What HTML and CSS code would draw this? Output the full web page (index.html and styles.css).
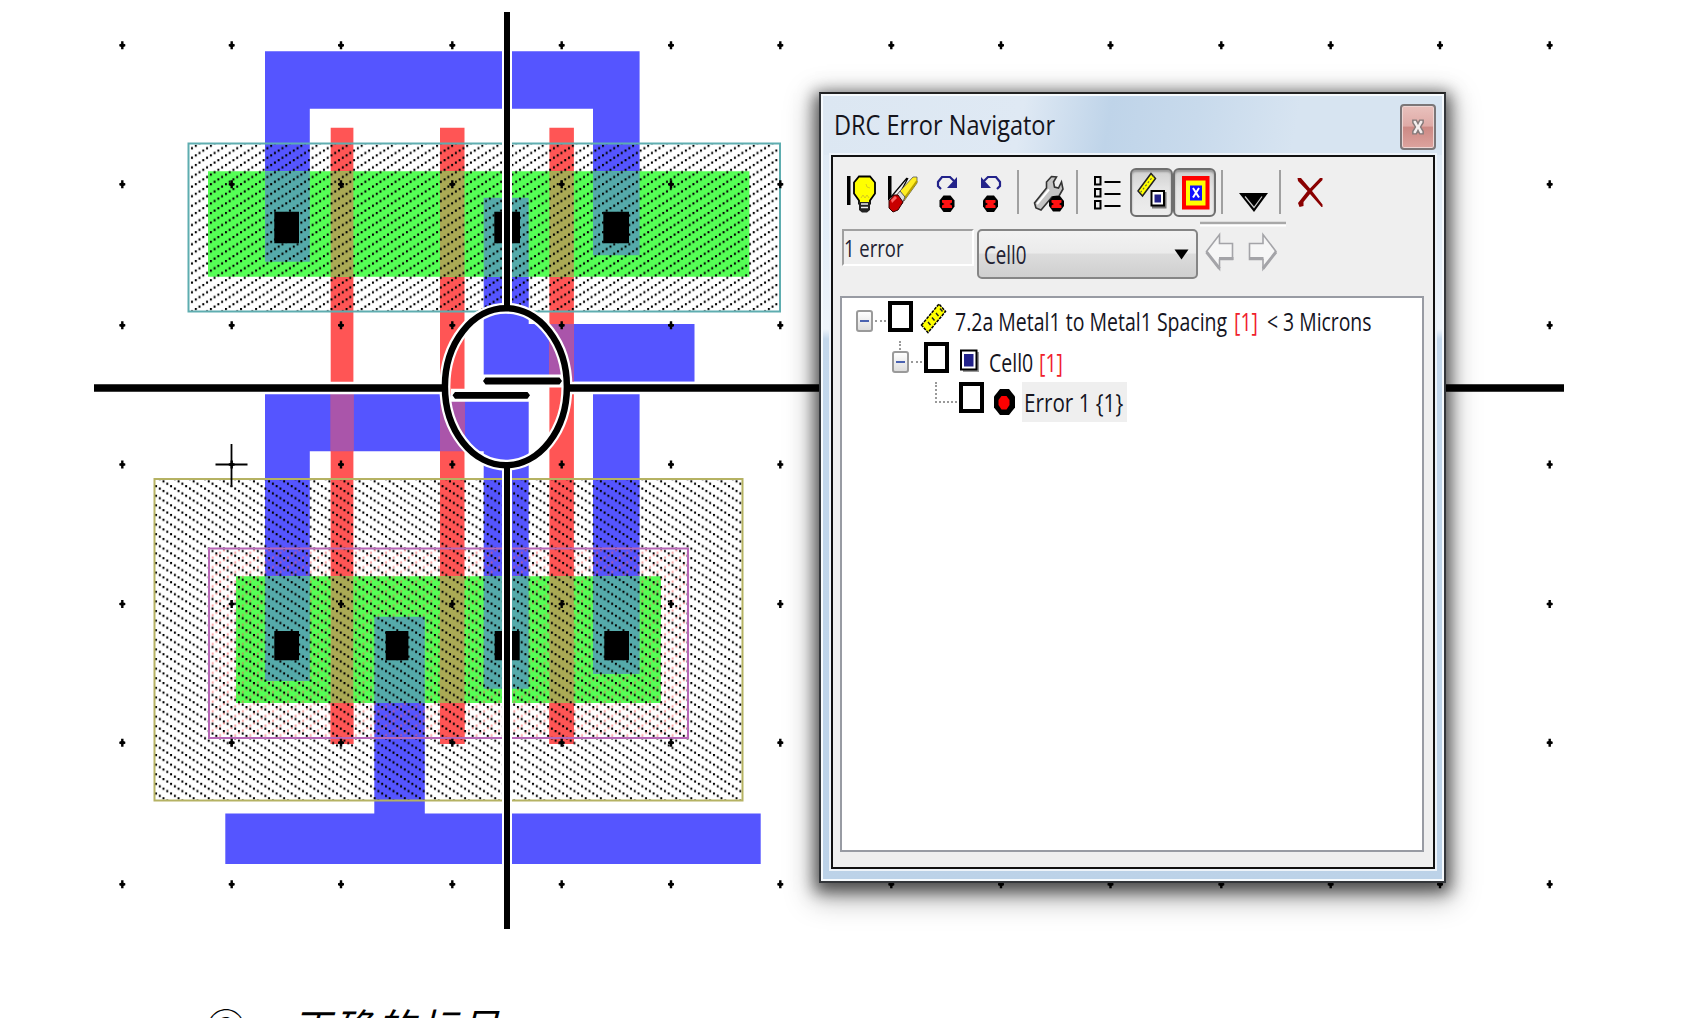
FILE: index.html
```html
<!DOCTYPE html>
<html lang="zh">
<head>
<meta charset="utf-8">
<title>DRC Error Navigator</title>
<link rel="stylesheet" href="styles.css">
</head>
<body>
<main class="page">
  <section class="figure">
    <svg class="layout" width="1684" height="960" viewBox="0 0 1684 960">
      <defs>
        <pattern id="hatch-up" patternUnits="userSpaceOnUse" x="190.1" y="139.9" width="15.08" height="9.604">
          <path d="M.9 7.3h2v2.100h-2zM4.700 4.900h2v2.100h-2zM8.400 2.500h2v2.100h-2zM12.200 .1h2v2.100h-2z"/>
        </pattern>
        <pattern id="hatch-down" patternUnits="userSpaceOnUse" x="154.1" y="485.1" width="15.08" height="9.604">
          <path d="M.9 .1h2v2.100h-2zM4.700 2.500h2v2.100h-2zM8.400 4.900h2v2.100h-2zM12.200 7.300h2v2.100h-2z"/>
        </pattern>
        <pattern id="hatch-red" patternUnits="userSpaceOnUse" x="210.8" y="549.3" width="15.08" height="9.604">
          <path fill="#f55" d="M.9 7.3h2v2.100h-2zM4.700 4.900h2v2.100h-2zM8.400 2.500h2v2.100h-2zM12.200 .1h2v2.100h-2z"/>
        </pattern>
        <path id="g" d="M-1.2-4h2.4v2.4l1.8 .6v2l-1.8 .6v2.4h-2.4v-2.4l-1.8-.6v-2l1.8-.6z"/>
        <g id="grid-row">
          <use href="#g" x="122.3"/><use href="#g" x="231.7"/><use href="#g" x="341"/><use href="#g" x="452.3"/><use href="#g" x="561.7"/><use href="#g" x="671"/><use href="#g" x="780.3"/><use href="#g" x="891.3"/><use href="#g" x="1001"/><use href="#g" x="1110.5"/><use href="#g" x="1221.3"/><use href="#g" x="1330.7"/><use href="#g" x="1440"/><use href="#g" x="1549.7"/>
        </g>
      </defs>

      <g class="metal">
        <path d="M265 51.3H639.6V255.3H593V108.7H309.8V261.7H265z"/>
        <path d="M483.7 197.7H528.7V324H694.5V381.7H483.7z"/>
        <path d="M265 394H528.7V688.7H483.7V451.3H309.8V681H265z"/>
        <path d="M593 394H639.6V674H593z"/>
        <path d="M374.3 616.7H424.8V813.5H760.7V864H225.3V813.5H374.3z"/>
      </g>
      <g class="poly">
        <path d="M330.7 127.7h22.7v616.3h-22.7zM440 127.7h24.5v616.3h-24.5zM549.4 127.7h24.5v616.3h-24.5z"/>
      </g>
      <path class="poly-metal" d="M330.7 394h22.7v57.3h-22.7zM440 394h24.5v57.3h-24.5zM549.4 324h24.5v57.7h-24.5z"/>
      <path class="active" d="M208 171.3h541.4v105.4H208zM236 576.3h425v126.7h-425z"/>
      <rect x="210" y="550" width="477" height="187" fill="url(#hatch-red)" opacity=".5"/>
      <path class="poly" d="M330.700 703h22.700v41h-22.700zM440 703h24.500v41h-24.500zM549.400 703h24.500v41h-24.500z"/>
      <path class="poly-active" d="M330.7 171.3h22.7v105.4h-22.7zM440 171.3h24.5v105.4h-24.5zM549.4 171.3h24.5v105.4h-24.5zM330.7 576.3h22.7v126.7h-22.7zM440 576.3h24.5v126.7h-24.5zM549.4 576.3h24.5v126.7h-24.5z"/>
      <path class="metal-active" d="M265 171.3h44.8v90.4h-44.8zM483.7 197.7h45v79h-45zM593 171.3h46.6v84h-46.6zM265 576.3h44.8v104.7h-44.8zM374.3 616.7h50.5v86.3h-50.5zM483.7 576.3h45v112.4h-45zM593 576.3h46.6v97.7h-46.6z"/>

      <rect x="190" y="144.500" width="588" height="166.500" fill="url(#hatch-up)"/>
      <rect x="155" y="480" width="587" height="320" fill="url(#hatch-down)"/>
      <path d="M274.3 211.700h24.700v31.600h-24.700zM494.300 211.700h25.700v31.600h-25.700zM603.300 211.700h25.700v31.600h-25.700zM274.300 631h24.700v29.300h-24.700zM385.700 631h22.700v29.300h-22.700zM494.700 631h25v29.300h-25zM604.300 631h24.700v29.300h-24.700z"/>
      <rect class="outline teal" x="188.500" y="143.500" width="591.500" height="168"/>
      <rect class="outline olive" x="154.500" y="479" width="588" height="321.500"/>
      <rect class="outline violet" x="209" y="548.500" width="479" height="189.500"/>

      <use href="#grid-row" y="45.300"/><use href="#grid-row" y="184.300"/><use href="#grid-row" y="325.300"/><use href="#grid-row" y="464.500"/><use href="#grid-row" y="604"/><use href="#grid-row" y="742.700"/><use href="#grid-row" y="884.300"/>
      <path class="origin" d="M215.500 464.500H247.500M231.500 444V487"/>

      <g class="halo">
        <path d="M507 12V305M507 468V929" stroke-width="10"/>
        <path d="M94 387.900H443M569 387.900H1564" stroke-width="12.500"/>
        <ellipse cx="505.900" cy="386.700" rx="61" ry="78.500" stroke-width="11"/>
        <path d="M481 381H564M451 395.300H531" stroke-width="13"/>
      </g>
      <g class="cross">
        <path d="M507 12V308M507 466V929" stroke-width="6"/>
        <path d="M94 388H445M567 388H1564" stroke-width="7.500"/>
        <ellipse cx="505.900" cy="386.700" rx="61" ry="78.500" stroke-width="6.500"/>
        <path d="M483 381l2.500-3.400h74l2.500 3.400-2.500 3.400h-74zM452.500 395.300l2.500-3.400h72.500l2.500 3.400-2.500 3.400h-72.500z" fill="#000" stroke="none"/>
      </g>
    </svg>

    <section class="window">
      <header class="titlebar">
        <h1 class="title"><span class="fit fit-title">DRC Error Navigator</span></h1>
        <button class="close" aria-label="Close"><svg width="12" height="16" viewBox="0 0 14 18"><path d="M1 1h4l2 4 2-4h4v3l-3 5 3 5v3h-4l-2-4-2 4h-4v-3l3-5-3-5z" fill="#f4eeee" stroke="#857a7a" stroke-width="1.700"/></svg></button>
      </header>
      <div class="panel">
        <div class="toolbar">
          <svg width="40" height="60" viewBox="840 162 40 60">
            <path d="M847 176h3.500v29h-3.500z"/>
            <path d="M859 176.500h11l5 6v11l-5 7v3h-11v-3l-5-7v-11z" fill="#ff0" stroke="#000" stroke-width="1.800"/>
            <path d="M866 184l1 3 3 1M861 198l2-3 2 3 2-3 2 3" fill="none" stroke="#d8cc20" stroke-width="1"/>
            <path d="M859 202h11v8l-3 2.500h-5l-3-2.500z" fill="#222"/><path d="M861 204h7M861 207.500h7" stroke="#eee" stroke-width="1.400"/>
          </svg>
          <svg width="46" height="60" viewBox="880 162 46 60">
            <path d="M888 176h3.500v21l-3.500 4z"/>
            <path d="M891 197L907 178M893 200l6-5 9-17" stroke="#000" stroke-width="1.200" fill="none"/>
            <path d="M900 191L913 177h4v6L904 201z" fill="#fe2" stroke="#555" stroke-width=".8"/><path d="M904 199L917 181" stroke="#b8a000" stroke-width="2"/>
            <path d="M896 196l4-5 5 6-3 7z" fill="#ddd" stroke="#555"/>
            <path d="M889 201l5-6h4l5 7-5 8-5 2-4-4z" fill="#c80000" stroke="#300"/><path d="M891 200l4-4 2 2-5 5z" fill="#f66"/>
          </svg>
          <svg width="42" height="60" viewBox="926 162 42 60">
            <path d="M941 189l-3-3v-4l4-5h8l4 4" fill="none" stroke="#22228a" stroke-width="2.200"/><path d="M957 177v11h-10z" fill="#22228a"/>
            <path d="M943.500 195.500h7l4 5v6l-4 5.500h-7l-4-5.500v-6z"/><path d="M942 200h10v2.500l-2.500 1.500 2.500 1.500v2.500h-10v-2.500l2.500-1.500-2.500-1.500z" fill="#f11"/>
          </svg>
          <svg width="44" height="60" viewBox="968 162 44 60">
            <path d="M997 189l3-3v-4l-4-5h-8l-4 4" fill="none" stroke="#22228a" stroke-width="2.200"/><path d="M981 177v11h10z" fill="#22228a"/>
            <path d="M987 195.500h7l4 5v6l-4 5.500h-7l-4-5.500v-6z"/><path d="M985.500 200h10v2.500l-2.500 1.500 2.500 1.500v2.500h-10v-2.500l2.500-1.500-2.500-1.500z" fill="#f11"/>
          </svg>
          <i class="sep"></i>
          <svg width="46" height="60" viewBox="1024 162 46 60">
            <path d="M1036 208l-1.500-5 12-15v-6l5-5.500 5 .5-3 5 1 5 4 1 3-6 1.500 7-4 7-7 1-11 13z" fill="#c4c4c4" stroke="#333" stroke-width="1.600"/><path d="M1037 204l12-14.500" stroke="#fff" stroke-width="2"/>
            <path d="M1053 196h7l4 5v5l-4 5.500h-7l-4-5.500v-5z"/><path d="M1051.500 200h10v2.500l-2.500 1.500 2.500 1.500v2.500h-10v-2.500l2.500-1.500-2.500-1.500z" fill="#f11"/>
          </svg>
          <i class="sep wide"></i>
          <svg width="46" height="60" viewBox="1084 162 46 60" fill="none" stroke="#000" stroke-width="2">
            <path d="M1095 177h5.500v7.500h-5.500zM1095 189h5.500v7.500h-5.500zM1095 201h5.500v7.500h-5.500z"/><path d="M1104.500 182h16M1104.500 194h16M1104.500 206h16"/>
          </svg>
          <span class="toggle"><svg width="38" height="44" viewBox="1132 170 38 44">
            <path d="M1138 191l13-17.500 4.500 5-13 17.500z" fill="#ff0" stroke="#222" stroke-width="1.500"/><path d="M1140.500 192.500L1154 175" stroke="#664" stroke-width="1.200" stroke-dasharray="2 2"/>
            <path d="M1153 193h12.500v14.500h-12.500z" fill="#777" stroke="#777" stroke-width="2"/><path d="M1151.500 191h12.500v14.500h-12.500z" fill="#fff" stroke="#000" stroke-width="2"/><path d="M1154.500 194.500h6.500v8h-6.500z" fill="#22228a"/>
          </svg></span>
          <span class="toggle"><svg width="38" height="44" viewBox="1175 170 38 44">
            <path d="M1182 176h27.500v33.500H1182z" fill="#f00"/><path d="M1186 180.500h19.500v25H1186z" fill="#ff0"/><path d="M1190 185.500h12v15h-12z" fill="#11f"/><path d="M1193 188l6 9.500M1199 188l-6 9.500" stroke="#fff" stroke-width="2"/>
          </svg></span>
          <i class="sep"></i>
          <svg width="46" height="60" viewBox="1228 162 46 60"><path d="M1239 193h29l-14 19z"/><path d="M1245 196.500l9 11 8-11" fill="none" stroke="#ccc" stroke-width="1.200"/></svg>
          <i class="sep"></i>
          <svg width="48" height="60" viewBox="1286 162 48 60">
            <path d="M1297.500 178h3.500l9 10.500 10-10.500h2.500v2l-10.500 11 10.500 13.500v2.500h-1l-11.500-13-6.500 8v4l-4 1-1.500-4 9.500-12-9.500-10z" fill="#8a0000"/>
          </svg>
        </div>
        <div class="filter">
          <div class="count"><span class="fit fit-count">1 error</span></div>
          <div class="combo"><span class="fit fit-combo">Cell0</span><svg width="15" height="11" viewBox="0 0 15 11"><path d="M.5.500h14L7.500 10.500z"/></svg></div>
          <svg class="arrows" width="92" height="62" viewBox="1197 220 92 62">
            <path d="M1200 223h86" stroke="#a8a8a8" stroke-width="2.500"/><path d="M1200 225.500h86" stroke="#fff" stroke-width="2"/>
            <g fill="#f6f6f6" stroke="#a4a4a8" stroke-width="1.600"><path d="M1206.500 251.500l13-17v9h13v16h-13v9.500z"/><path d="M1276 251.500l-13-17v9h-13.500v16h13.500v9.500z"/></g>
            <path d="M1206.500 252l13 16.500M1219 258.500h14.500M1249 258.500h14.500M1263 268.500l13-16.500" fill="none" stroke="#a4a4a8" stroke-width="3"/>
          </svg>
        </div>
        <div class="tree">
          <div class="row">
            <b class="expander"></b><i class="dots"></i><b class="check"></b>
            <svg class="rule" width="27" height="32" viewBox="920 302 27 32"><path d="M921.500 325L939 304l6.500 7.500L928 332.500z" fill="#ff0"/><path d="M921.500 325L939 304l6.500 7.500L928 332.500z" fill="none" stroke="#000" stroke-width="1.500" stroke-dasharray="3 1"/><path d="M928 322l2.500 3M932 317.500l2.500 3M936 313l2.500 3M940 308.500l2.500 3" stroke="#222" stroke-width="1.400"/></svg>
            <span class="label w-rule"><span class="fit fit-rule">7.2a Metal1 to Metal1 Spacing</span></span><span class="label red w-num"><span class="fit fit-num">[1]</span></span><span class="label w-limit"><span class="fit fit-limit">&lt; 3 Microns</span></span>
          </div>
          <div class="row cell">
            <b class="expander child"></b><i class="dots"></i><b class="check"></b>
            <svg class="cellicon" width="20" height="24" viewBox="960 348 20 24"><path d="M963 351h16v20h-16z" fill="#999"/><path d="M961 349.500h15.500v19H961z" fill="#fff" stroke="#000" stroke-width="2"/><path d="M964 353h9.500v12.500H964z" fill="#22228a"/></svg>
            <span class="label w-cell"><span class="fit fit-cell">Cell0</span></span><span class="label red w-num"><span class="fit fit-num">[1]</span></span>
          </div>
          <div class="row error">
            <i class="elbow"></i><b class="check"></b>
            <svg class="dot" width="22" height="28" viewBox="993 388 22 28"><path d="M1000 389h9l6 7.500v11l-6 7.500h-9l-6-7.500v-11z"/><path d="M1001.500 396h5l3 4v5l-3 4.500h-5l-3-4.500v-5z" fill="#f00"/></svg>
            <span class="label selected"><span class="fit fit-error">Error 1 {1}</span></span>
          </div>
        </div>
      </div>
    </section>
  </section>
  <p class="caption"><span class="num">②</span><span>正确的标号</span></p>
</main>
</body>
</html>
```
FILE: styles.css
```css
* { box-sizing: border-box; }
body { margin: 0; background: #fff; }
.page { width: 1684px; height: 1018px; overflow: hidden; }
.figure { position: relative; height: 960px; }
.layout { display: block; }
.metal { fill: #55f; }
.poly { fill: #f55; }
.active { fill: #5f5; }
.poly-metal { fill: #a5a; }
.poly-active { fill: #aa5; }
.metal-active { fill: #5aa; }
.outline { fill: none; stroke-width: 2; }
.teal { stroke: #5eadb0; }
.olive { stroke: #b5b263; }
.violet { stroke: #b767b7; }
.origin { stroke: #000; stroke-width: 1.8; }
.halo { fill: none; stroke: #fff; }
.cross { fill: none; stroke: #000; }

.window {
  position: absolute; left: 819px; top: 92px; width: 627px; height: 791px;
  display: flex; flex-direction: column; padding: 2px 9px 12px 10px;
  border: 2px solid #33363a; border-top-color: #222;
  background: linear-gradient(#dce7f2 0, #e4eef8 150px, #eef4fa 235px, #c4d8ec 245px, #bcd2e8 100%);
  box-shadow: inset 0 0 0 2px #f6fafd, 0 5px 15px 4px rgba(0,0,0,.6), 0 10px 28px 6px rgba(0,0,0,.28);
  font-family: "Open Sans", "Noto Sans", sans-serif;
}
.titlebar {
  height: 59px; flex: none; display: flex; justify-content: space-between; align-items: flex-start;
  margin: 0 -7px; padding: 0 6px 0 10px;
  background: linear-gradient(100deg, #dce7f2 0, #dfe9f4 32%, #bfd4e9 46%, #c8daec 60%, #d7e4f1 76%, #d7e4f1 100%);
}
.title { margin: 8px 0 0; font-size: 28px; line-height: 40px; font-weight: 400; color: #15151c; width: 230px; }
.fit { display: inline-block; white-space: pre; transform-origin: 0 50%; }
.close {
  width: 36px; height: 46px; margin: 8px 0 0; padding: 0; border: 2px solid #7b7678; border-radius: 4px;
  background: linear-gradient(#e9c1bd 0, #dfaaa6 48%, #cc8984 50%, #dda39e 100%);
  box-shadow: inset 0 0 0 1px #eed5d3; display: flex; align-items: center; justify-content: center;
}
.panel {
  flex: 1; display: flex; flex-direction: column; background: #efefef;
  border: 2px solid #111; box-shadow: 0 0 0 2px #edf3f9; padding: 5px 9px 15px 7px;
}
.toolbar { height: 60px; display: flex; align-items: center; flex: none; }
.toolbar > svg { flex: none; }
.sep { flex: none; width: 2px; height: 44px; margin: 0 5px; background: #a0a0a0; }
.sep.wide { margin: 0 6px; }
.toggle {
  flex: none; width: 43px; height: 49px; border: 2px solid #6e6e6e; border-radius: 6px;
  background: linear-gradient(#cfcfcf, #e4e4e4 40%, #ededed); box-shadow: inset 0 2px 2px #999; overflow: hidden;
}
.toggle svg { display: block; }
.filter { height: 74px; flex: none; display: flex; align-items: flex-start; padding: 7px 0 0 2px; }
.count {
  width: 132px; height: 37px; border: solid #fff; border-width: 2px; border-top-color: #a0a0a0; border-left-color: #a0a0a0;
  font-size: 24px; line-height: 33px; color: #223;
}
.combo {
  width: 221px; height: 50px; margin-left: 3px; padding: 0 7px 0 5px; border: 2px solid #858585; border-radius: 5px;
  background: linear-gradient(#f2f2f2 0, #ebebeb 48%, #dcdcdc 50%, #cfcfcf 100%);
  display: flex; justify-content: space-between; align-items: center; font-size: 25px; line-height: 42px; color: #223;
}
.arrows { margin: -9px 0 0 -1px; }
.tree { flex: 1; background: #fff; border: 2px solid #989ba3; padding: 3px 0 0 14px; }
.row { height: 40.500px; display: flex; align-items: flex-start; }
.row.cell { padding-left: 36px; }
.row.error { padding-left: 79px; }
.expander {
  flex: none; position: relative; width: 17px; height: 22px; margin-top: 9px; border: 2px solid #9a9a9a; border-radius: 3px;
  background: linear-gradient(#fff, #ddd);
}
.expander::after { content: ""; position: absolute; left: 2px; top: 8px; width: 9px; height: 2px; background: #4a62b0; }
.expander.child::before { content: ""; position: absolute; left: 5px; top: -12px; height: 9px; border-left: 2px dotted #999; }
.dots { flex: none; width: 11px; margin: 19px 2px 0 2px; border-top: 2px dotted #999; }
.check { flex: none; width: 25px; height: 31px; border: 4px solid #000; background: #fff; }
.rule { flex: none; margin: 1px 8px 0 7px; }
.cellicon { flex: none; margin: 7px 9px 0 11px; }
.elbow { flex: none; width: 22px; height: 21px; margin-right: 2px; border: dotted #999; border-width: 0 0 2px 2px; }
.dot { flex: none; margin: 6px 7px 0 9px; }
.label { flex: none; font-size: 26px; line-height: 40px; color: #15151f; }
.label.red { color: #f0202c; }
.w-rule { width: 279px; }
.w-num { width: 33px; }
.w-limit { width: 110px; }
.w-cell { width: 50px; }
.selected { width: 105px; height: 40px; padding-left: 2px; background: #efefef; }
.fit-title { transform: scaleX(.84); }
.fit-count { transform: scaleX(.77); }
.fit-combo { transform: scaleX(.75); }
.fit-rule { transform: scaleX(.75); }
.fit-num { transform: scaleX(.75); }
.fit-limit { transform: scaleX(.745); }
.fit-cell { transform: scaleX(.75); }
.fit-error { transform: scaleX(.795); }
.caption {
  margin: 37px 0 0 206px; display: flex; gap: 43px; color: #000; white-space: nowrap;
  font: 400 40px/58px "Noto Sans CJK SC", "Noto Sans CJK JP", sans-serif; letter-spacing: 2px;
}
.caption .num { font-weight: 300; }
.caption span + span { font-style: italic; }
```
